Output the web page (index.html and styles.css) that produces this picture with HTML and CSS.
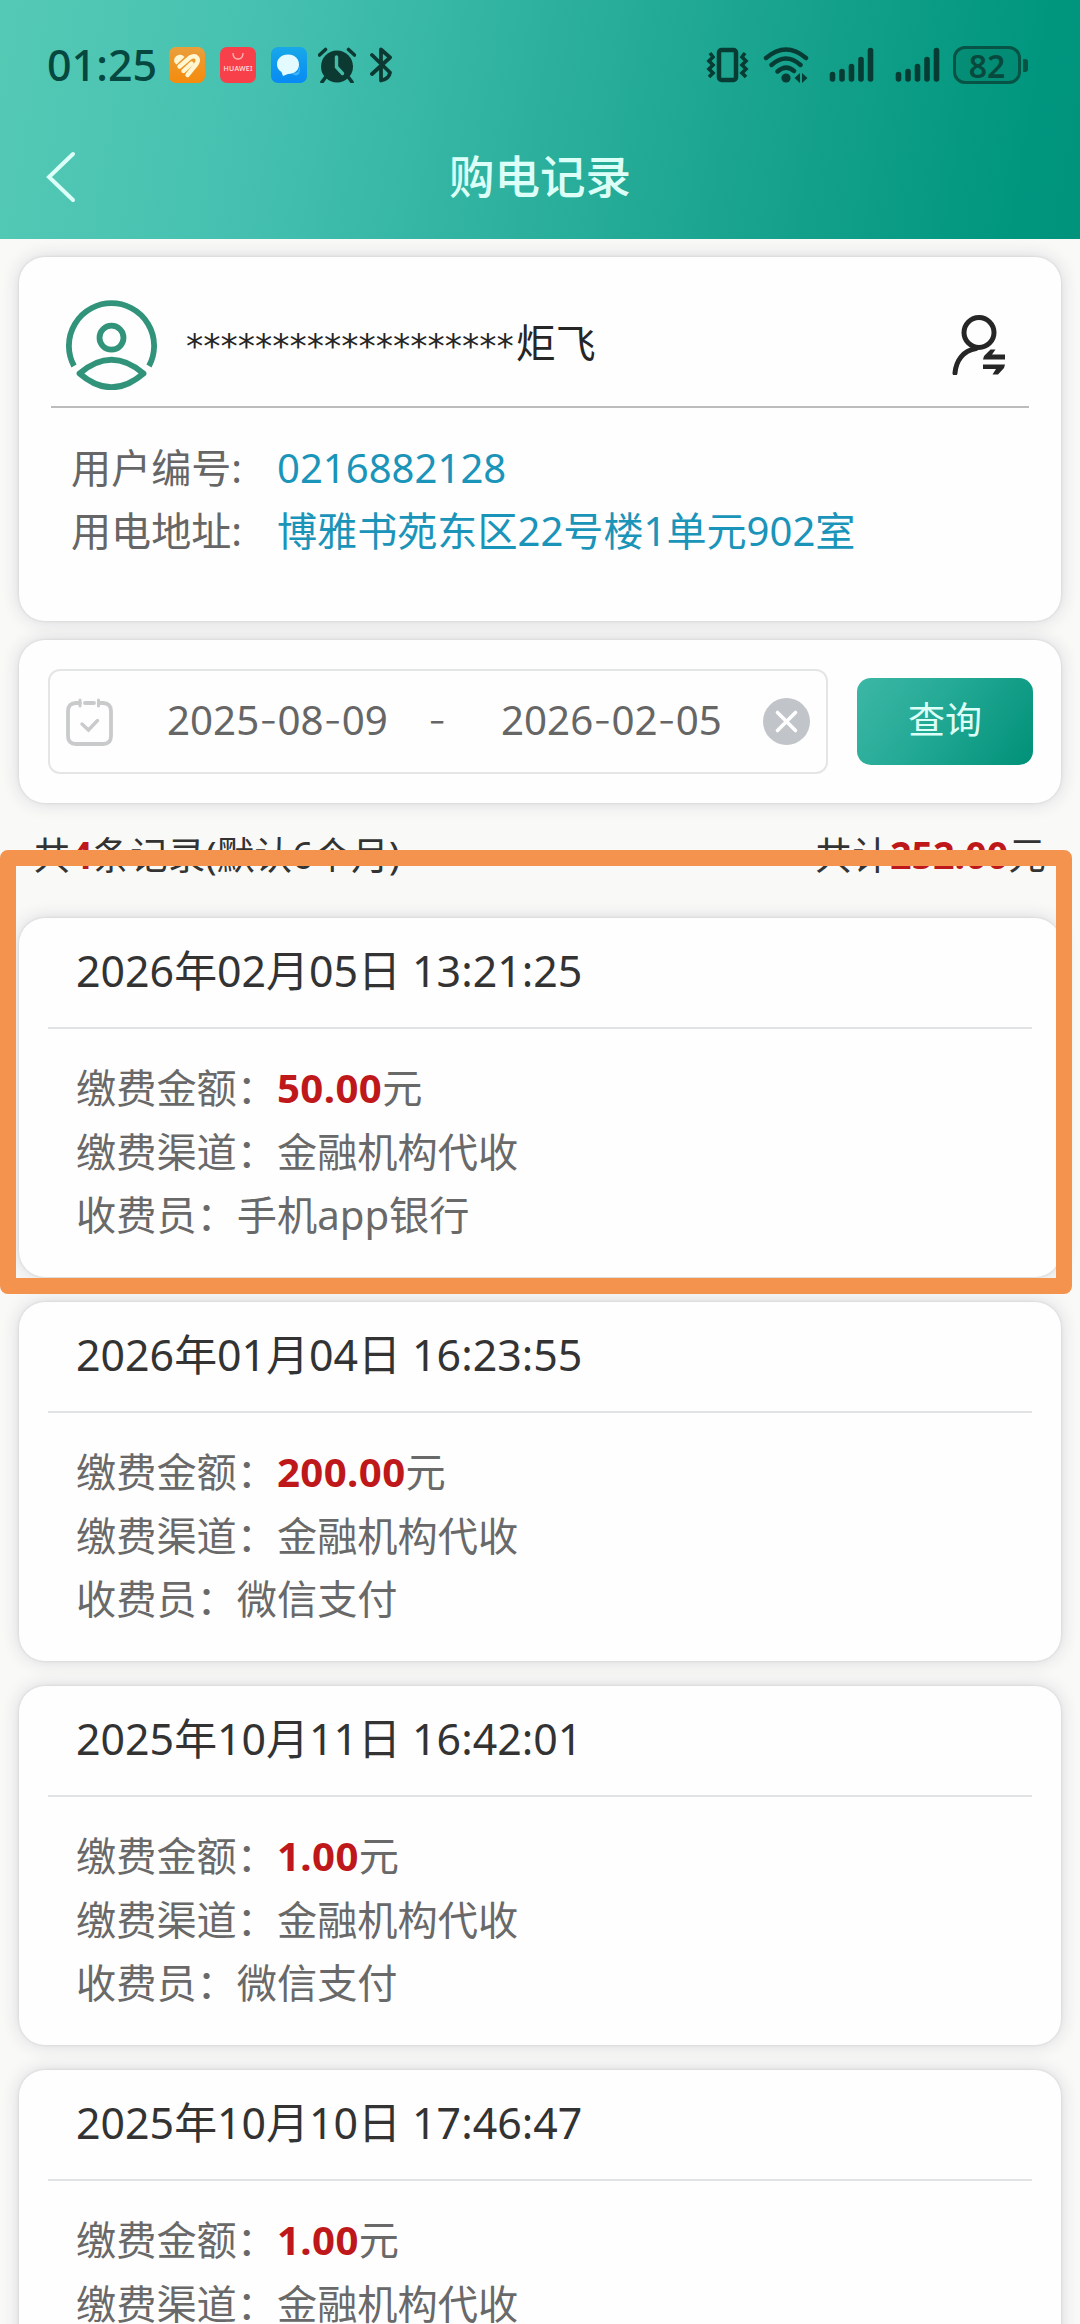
FILE: index.html
```html
<!DOCTYPE html>
<html lang="zh-CN">
<head>
<meta charset="utf-8">
<title>购电记录</title>
<link rel="stylesheet" href="styles.css">
</head>
<body>
<div class="screen">
  <header class="header">
    <div class="status">
      <span class="clock">01:25</span>
      <div class="status-left">
        <svg class="app" viewBox="0 0 36 36"><defs><linearGradient id="o" x2="0" y2="1"><stop stop-color="#e99f3c"/><stop offset="1" stop-color="#f58b0c"/></linearGradient></defs><rect width="36" height="36" rx="7" fill="url(#o)"/><path d="M5.500 15.500C4 11 8 6.500 12.500 8Q14.500 8.500 15.500 10L7.500 17.500Z" fill="#fff6d2"/><g stroke="#fff6d2" stroke-width="4.400" stroke-linecap="round" fill="none"><path d="M10.500 19.500L21 10.500Q26 7.500 28.500 11.500Q29.500 14.500 27 17.500L18.500 28"/><path d="M14.500 24L22.500 16.500"/></g></svg>
        <svg class="app" viewBox="0 0 36 36"><rect width="36" height="36" rx="7" fill="#f8404a"/><path d="M13 6Q13 12 18 12T23 6" fill="none" stroke="#ffb5b4" stroke-width="1.300"/><text x="18" y="24" text-anchor="middle" textLength="29" font-size="7" font-weight="500" fill="#ffe4e0">HUAWEI</text></svg>
        <svg class="app" viewBox="0 0 36 36"><defs><linearGradient id="b" x2="0" y2="1"><stop stop-color="#18a8e8"/><stop offset="1" stop-color="#078af5"/></linearGradient></defs><rect width="36" height="36" rx="7" fill="url(#b)"/><path d="M21 27Q30 32 29 19L27 25z" fill="#3bb5fb"/><path d="M17 7.500C24 7.500 28 12 28 17.500S24 27 17 27L12 29L10.500 25C7.500 23 6 20.500 6 17.500C6 12 10 7.500 17 7.500Z" fill="#e3fbff"/></svg>
        <svg class="alarm" viewBox="0 0 38 36"><circle cx="19" cy="19.500" r="16" fill="#0c3a33"/><path d="M1.500 8L7.500 2.500M36.500 8L30.500 2.500M7 31L4 35M31 31L34 35" stroke="#0c3a33" stroke-width="3.600" stroke-linecap="round"/><path d="M18.500 10V20L24.500 26.500" fill="none" stroke="#45bba7" stroke-width="3.400" stroke-linecap="round"/></svg>
        <svg class="bt" viewBox="0 0 22 36"><path d="M2 8L20 25.500Q19 32 11 33.500V2.500L20 10.500L2 27" fill="none" stroke="#0c3a33" stroke-width="3.800" stroke-linejoin="round" stroke-linecap="round"/></svg>
      </div>
      <div class="status-right">
        <svg width="44" height="36" viewBox="0 0 44 36" fill="none" stroke="#063c33"><rect x="13" y="3" width="17" height="30" rx="2.500" stroke-width="4.500"/><path d="M4 6L7 10L3 14L7 18L3 22L7 26L3 30M39 6L36 10L40 14L36 18L40 22L36 26L40 30" stroke-width="3.600"/></svg>
        <svg width="46" height="36" viewBox="0 0 46 36" fill="none" stroke="#063c33" stroke-width="4.400" stroke-linecap="round"><path d="M3 11Q23-6 43 11M8.500 18Q23 5 37.500 18M14.500 24.500Q23 17 31 24"/><circle cx="23" cy="31" r="4.600" fill="#063c33" stroke="none"/><path d="M37 26v10l-5.500-5zM39 26v10l5.500-5z" fill="#063c33" stroke="none"/></svg>
        <svg class="sig" width="45" height="36" viewBox="0 0 45 36" stroke="#063c33" stroke-width="5.600" stroke-linecap="round"><path d="M3.500 27.500V32M13 24.500V32M22.500 19.500V32M32 12.500V32M41.500 3.500V32"/></svg>
        <svg class="sig2" width="45" height="36" viewBox="0 0 45 36" stroke="#063c33" stroke-width="5.600" stroke-linecap="round"><path d="M3.500 27.500V32M13 24.500V32M22.500 19.500V32M32 12.500V32M41.500 3.500V32"/></svg>
        <span class="battery">82</span>
      </div>
    </div>
    <div class="nav">
      <svg class="back" viewBox="0 0 30 52"><path d="M27 3L3 26L27 49" fill="none" stroke="#dcfff8" stroke-width="4" stroke-linecap="round"/></svg>
      <h1>购电记录</h1>
    </div>
  </header>

  <section class="card user">
    <div class="user-head">
      <svg class="avatar" viewBox="0 0 91 91" fill="none" stroke="#31947a" stroke-width="5.800"><path d="M8 67A42.600 42.600 0 1 1 83 67"/><circle cx="45.500" cy="38.700" r="12"/><path d="M13.500 74.500Q45.500 47 77.500 74.500Q45.500 102 13.500 74.500Z" stroke-linejoin="round"/></svg>
      <span class="name"><span class="stars">*******************</span>炬飞</span>
      <svg class="switch" viewBox="0 0 54 60"><g fill="none" stroke="#262626" stroke-width="5"><circle cx="27" cy="17.500" r="15"/><path d="M24 33.500C11 35.500 4 46 3 58" stroke-linecap="round"/></g><path d="M31 44.500L32 41L38.500 34.500H43.500L40 39.500H53V44.500ZM31 49.500H53L52 53L46 59.500H40.500L44 54H31Z" fill="#262626"/></svg>
    </div>
    <dl class="info">
      <dt>用户编号:</dt><dd>0216882128</dd>
      <dt>用电地址:</dt><dd>博雅书苑东区22号楼1单元902室</dd>
    </dl>
  </section>

  <section class="card search">
    <div class="range">
      <svg class="cal" viewBox="0 0 47 48" fill="none" stroke="#c9cacb" stroke-linecap="round"><path d="M10 5Q2 5 2 13V38Q2 46 10 46H37Q45 46 45 38V13Q45 5 37 5M19 5H28" stroke-width="3.800"/><path d="M14 2V8M32.500 2V8" stroke-width="3"/><path d="M10 5H14M33 5H37" stroke-width="3.800"/><path d="M16 26L22.500 32L31.500 22.500" stroke-width="3.400"/></svg>
      <span class="date">2025<i>-</i>08<i>-</i>09</span>
      <span class="dash">-</span>
      <span class="date">2026<i>-</i>02<i>-</i>05</span>
      <svg class="clear" viewBox="0 0 47 47"><circle cx="23.500" cy="23.500" r="23.500" fill="#c1c4c9"/><path d="M14.500 14.500L32.500 32.500M32.500 14.500L14.500 32.500" stroke="#fff" stroke-width="3.600" stroke-linecap="round"/></svg>
    </div>
    <button class="query">查询</button>
  </section>

  <div class="summary">
    <span>共<b>4</b>条记录(默认6个月)</span>
    <span>共计<b>252.00</b>元</span>
  </div>

  <main class="records">
    <article class="card record">
      <h2>2026年02月05日 13:21:25</h2>
      <div class="detail">
        <p>缴费金额：<b>50.00</b>元</p>
        <p>缴费渠道：金融机构代收</p>
        <p>收费员：手机app银行</p>
      </div>
    </article>
    <article class="card record">
      <h2>2026年01月04日 16:23:55</h2>
      <div class="detail">
        <p>缴费金额：<b>200.00</b>元</p>
        <p>缴费渠道：金融机构代收</p>
        <p>收费员：微信支付</p>
      </div>
    </article>
    <article class="card record">
      <h2>2025年10月11日 16:42:01</h2>
      <div class="detail">
        <p>缴费金额：<b>1.00</b>元</p>
        <p>缴费渠道：金融机构代收</p>
        <p>收费员：微信支付</p>
      </div>
    </article>
    <article class="card record">
      <h2>2025年10月10日 17:46:47</h2>
      <div class="detail">
        <p>缴费金额：<b>1.00</b>元</p>
        <p>缴费渠道：金融机构代收</p>
      </div>
    </article>
  </main>
  <div class="highlight"></div>
</div>
</body>
</html>
```
FILE: styles.css
```css
* { box-sizing: border-box; margin: 0; padding: 0; }
body { background: #f9f9f9; }
svg { display: block; flex: none; }
.screen {
  position: relative;
  width: 1080px;
  height: 2324px;
  overflow: hidden;
  background: #f9f9f8;
  font-family: "Noto Sans", "Noto Sans CJK SC", sans-serif;
  color: #333;
}

/* header */
.header {
  height: 239px;
  padding-top: 36px;
  background: linear-gradient(100deg, #54cab5 0%, #45c0b0 25%, #2cb09d 50%, #13a08a 75%, #00967e 94%, #00937c 100%);
}
.status { display: flex; align-items: center; height: 57px; padding: 0 50px 0 47px; }
.clock { width: 122px; font-size: 43px; line-height: 57px; font-weight: 500; color: #064840; }
.status-left { display: flex; align-items: center; }
.app { width: 36px; height: 36px; margin-right: 15px; }
.alarm { width: 38px; height: 36px; margin-left: -4px; }
.bt { width: 22px; height: 36px; margin-left: 14px; }
.status-right { display: flex; align-items: center; margin-left: auto; }
.status-right svg + svg { margin-left: 13px; }
.status-right .sig.sig { margin-left: 20px; }
.status-right .sig2.sig2 { margin-left: 21px; }
.battery {
  position: relative;
  width: 68px;
  height: 38px;
  margin: 0 9px 0 13px;
  border: 3px solid #075345;
  border-radius: 12px;
  background: rgba(0, 90, 65, .18);
  font-size: 32px;
  line-height: 33px;
  font-weight: 600;
  text-align: center;
  color: #07493d;
}
.battery::after {
  content: "";
  position: absolute;
  left: 67px;
  top: 10px;
  width: 5px;
  height: 13px;
  border-radius: 0 3px 3px 0;
  background: #075345;
}
.nav { display: grid; grid-template-columns: 1fr auto 1fr; align-items: center; height: 166px; padding: 0 46px; }
.back { width: 30px; height: 52px; margin-top: 2px; }
.nav h1 { grid-column: 2; font-size: 45.500px; line-height: 60px; font-weight: 500; color: #dcfff8; }

/* cards */
.card {
  width: 1042px;
  margin-left: 19px;
  border-radius: 26px;
  background: #fefefe;
  box-shadow: 0 0 18px rgba(20, 35, 35, .16), 0 0 3px rgba(20, 30, 30, .12);
}
.user { height: 364px; margin-top: 18px; padding: 0 32px; }
.user-head { display: flex; align-items: center; height: 151px; padding: 26px 23px 0 15px; border-bottom: 2px solid #bcbcbc; }
.avatar { width: 91px; height: 91px; }
.name { margin-left: 29px; font-size: 40px; line-height: 60px; color: #262626; }
.stars { margin-right: 2px; font-family: "DejaVu Sans", sans-serif; font-size: 34.500px; }
.switch { width: 54px; height: 60px; margin-left: auto; }
.info { display: grid; grid-template-columns: 206px auto; padding: 28px 0 0 20px; font-size: 40.100px; line-height: 63px; }
.info dt { color: #666; }
.info dd { color: #1b94b9; white-space: nowrap; }

.search { display: flex; align-items: center; height: 163px; margin-top: 19px; padding: 0 28px 0 29px; }
.range {
  display: flex;
  align-items: center;
  width: 780px;
  height: 105px;
  padding: 0 16px;
  border: 2px solid #e4e5e5;
  border-radius: 12px;
  font-size: 40.300px;
  line-height: 60px;
  color: #666;
}
.cal { width: 47px; height: 48px; }
.date { width: 223px; margin: -2px 0 0 54px; white-space: nowrap; }
.date i { font-family: Inter, sans-serif; font-style: normal; font-weight: 300; }
.dash { width: 20px; margin: -2px 0 0 38px; font-family: Inter, sans-serif; font-weight: 300; }
.dash + .date { margin-left: 53px; }
.clear { width: 47px; height: 47px; margin-left: auto; }
.query {
  width: 176px;
  height: 87px;
  margin-left: auto;
  padding-bottom: 8px;
  border: 0;
  border-radius: 14px;
  background: linear-gradient(125deg, #3db7a6, #24aa96 42%, #009078);
  font: inherit;
  font-size: 37px;
  color: #dcfff8;
}

.summary {
  display: flex;
  justify-content: space-between;
  height: 115px;
  padding: 21px 34px 0 33px;
  font-size: 37.700px;
  line-height: 62px;
}
.summary b, .detail b { color: #be181a; }

/* payment records */
.records { display: flex; flex-direction: column; gap: 25px; }
.record { flex: none; height: 359px; padding: 0 29px; }
.record h2 { height: 111px; padding-left: 28px; border-bottom: 2px solid #e1e2e3; font-size: 42.900px; line-height: 106px; font-weight: 400; color: #333; white-space: pre; }
.detail { padding: 27px 0 0 28px; font-size: 40.200px; line-height: 63.500px; color: #696969; }
.detail b { letter-spacing: .4px; }

.highlight { position: absolute; left: 0; top: 850px; width: 1072px; height: 444px; border: 16px solid #f3934d; border-radius: 8px; }
```
